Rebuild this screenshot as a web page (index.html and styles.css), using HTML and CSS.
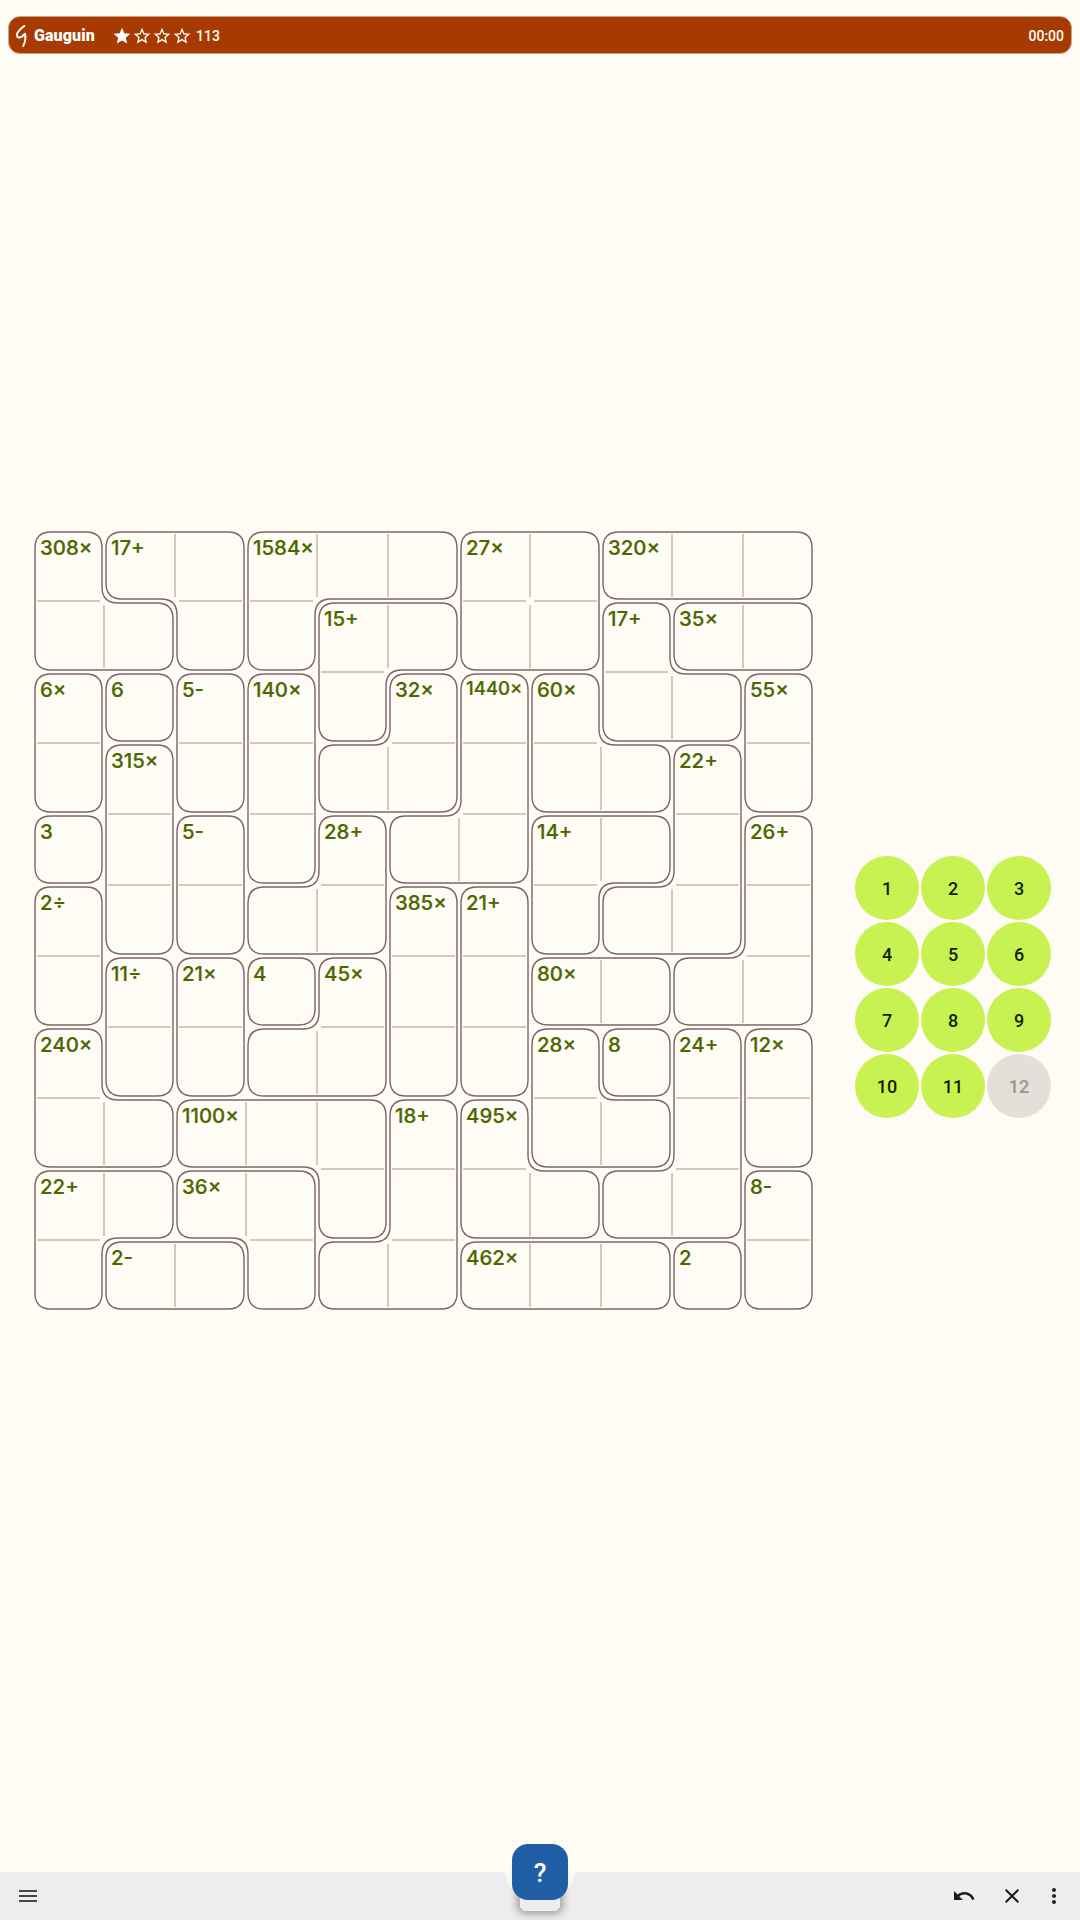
FILE: index.html
```html
<!DOCTYPE html>
<html lang="en">
<head>
<meta charset="utf-8">
<title>Gauguin</title>
<link rel="stylesheet" href="styles.css">
</head>
<body>
<header class="topbar">
  <svg class="logo" width="12" height="22" viewBox="0 0 12 22" fill="none" stroke="currentColor" stroke-width="2" stroke-linecap="round" stroke-linejoin="round"><path d="M8.300 1C6 2 1.500 7 1 9C.500 12.500 3 13.500 6 11.500L9 8.800C9.800 13 9 18 7.200 21"/></svg>
  <span class="app-name">Gauguin</span>
  <span class="stars">
    <svg class="star" viewBox="0 0 24 24"><path d="M12 17.270 18.180 21l-1.640-7.030L22 9.240l-7.190-.610L12 2 9.190 8.630 2 9.240l5.460 4.730L5.820 21z"/></svg>
    <svg class="star" viewBox="0 0 24 24"><path d="m22 9.240-7.190-.620L12 2 9.190 8.630 2 9.240l5.460 4.730L5.820 21 12 17.270 18.180 21l-1.630-7.030zM12 15.400l-3.760 2.270 1-4.280-3.320-2.880 4.380-.380L12 6.100l1.710 4.040 4.380.38-3.320 2.880 1 4.280z"/></svg>
    <svg class="star" viewBox="0 0 24 24"><path d="m22 9.240-7.190-.620L12 2 9.190 8.630 2 9.240l5.460 4.730L5.820 21 12 17.270 18.180 21l-1.630-7.030zM12 15.400l-3.760 2.270 1-4.280-3.320-2.880 4.380-.380L12 6.100l1.710 4.040 4.380.38-3.320 2.880 1 4.280z"/></svg>
    <svg class="star" viewBox="0 0 24 24"><path d="m22 9.240-7.190-.620L12 2 9.190 8.630 2 9.240l5.460 4.730L5.820 21 12 17.270 18.180 21l-1.630-7.030zM12 15.400l-3.760 2.270 1-4.280-3.320-2.880 4.380-.380L12 6.100l1.710 4.040 4.380.38-3.320 2.880 1 4.280z"/></svg>
  </span>
  <span class="difficulty">113</span>
  <time class="timer">00:00</time>
</header>
<main class="game">
  <svg class="board" width="781" height="781" viewBox="0 0 781 781"></svg>
  <div class="keypad">
    <button class="key">1</button><button class="key">2</button><button class="key">3</button>
    <button class="key">4</button><button class="key">5</button><button class="key">6</button>
    <button class="key">7</button><button class="key">8</button><button class="key">9</button>
    <button class="key">10</button><button class="key">11</button><button class="key" disabled>12</button>
  </div>
</main>
<footer class="bottombar">
  <svg class="menu" width="24" height="24" viewBox="0 0 24 24"><path d="M3 18h18v-2H3zm0-5h18v-2H3zm0-7v2h18V6z"/></svg>
  <svg class="undo" width="24" height="24" viewBox="0 0 24 24"><path d="M12.500 8c-2.650 0-5.050.990-6.900 2.600L2 7v9h9l-3.620-3.620c1.390-1.160 3.160-1.880 5.120-1.880 3.540 0 6.550 2.310 7.600 5.500l2.370-.780C21.080 11.030 17.150 8 12.500 8"/></svg>
  <svg class="close" width="24" height="24" viewBox="0 0 24 24"><path d="M19 6.410 17.590 5 12 10.590 6.410 5 5 6.410 10.590 12 5 17.590 6.410 19 12 13.410 17.590 19 19 17.590 13.410 12z"/></svg>
  <svg class="more" width="24" height="24" viewBox="0 0 24 24"><path d="M12 8c1.100 0 2-.900 2-2s-.900-2-2-2-2 .900-2 2 .900 2 2 2m0 2c-1.100 0-2 .900-2 2s.900 2 2 2 2-.900 2-2-.900-2-2-2m0 6c-1.100 0-2 .900-2 2s.900 2 2 2 2-.900 2-2-.900-2-2-2"/></svg>
  <svg class="cradle" width="78" height="32" viewBox="0 0 78 32"><path d="M0 0H78C74 0 73 2 72.500 4C69 19 62 28 52 28H26C16 28 9 19 5.500 4C5 2 4 0 0 0Z"/></svg>
  <div class="fab-shade"></div>
  <div class="fab-tab"></div>
  <button class="fab">?</button>
</footer>
<script src="board.js"></script>
</body>
</html>
```
FILE: styles.css
```css
* { box-sizing: border-box; }
body {
  margin: 0;
  width: 1080px;
  height: 1920px;
  display: flex;
  flex-direction: column;
  background: #fffcf5;
  font-family: Roboto, sans-serif;
  overflow: hidden;
}
.topbar {
  display: flex;
  align-items: center;
  height: 38px;
  margin: 16px 8px 0;
  padding: 1px 7px 0 7px;
  border: 1px solid #c9a58d;
  border-radius: 12px;
  background: #a73a00;
  color: #fff;
  flex: none;
}
.logo { flex: none; }
.app-name { margin-left: 6px; width: 78px; font-size: 16px; font-weight: 900; letter-spacing: .1px; }
.stars { display: flex; }
.star { width: 20px; height: 20px; fill: currentColor; flex: none; }
.difficulty { margin-left: 4px; font-size: 14px; font-weight: 500; }
.timer { margin-left: auto; font-size: 14px; font-weight: 500; }
.game {
  flex: 1;
  display: flex;
  align-items: flex-start;
  padding: 476px 0 0 33px;
  gap: 41px;
}
.board { display: block; flex: none; }
.cage { fill: none; stroke: #7d6467; stroke-width: 1.4; }
.divider { stroke: #d1c8c2; stroke-width: 2; }
.clue { fill: #4c6700; font-family: Inter, sans-serif; font-size: 20.4px; font-weight: 500; stroke: #4c6700; stroke-width: .2; }
.clue-long { font-size: 18.6px; }
.keypad { display: grid; grid-template-columns: repeat(3, 64px); gap: 2px; margin-top: 326px; }
.key {
  height: 64px;
  padding: 1px 0 0;
  border: 0;
  border-radius: 50%;
  background: #c8f152;
  color: #151f00;
  font: 500 18px Roboto, sans-serif;
}
.key:disabled { background: #e3e0da; color: #97968f; }
.bottombar {
  position: relative;
  flex: none;
  display: flex;
  align-items: center;
  height: 48px;
  padding: 0 14px 0 16px;
  background: #efedf0;
  fill: #1b1c18;
}
.menu { fill: #46483c; }
.undo { margin-left: auto; }
.close { margin-left: 24px; }
.more { margin-left: 18px; }
.cradle { position: absolute; left: 501px; top: 0; fill: #fffcf5; }
.fab-shade {
  position: absolute;
  left: 520px;
  top: -8px;
  width: 40px;
  height: 46px;
  border-radius: 5px;
  box-shadow: 0 1px 9px 3px rgba(0, 0, 0, .35);
}
.fab-tab {
  position: absolute;
  left: 520px;
  top: 20px;
  width: 40px;
  height: 19px;
  background: #efedf0;
  clip-path: polygon(0 0, 100% 0, 100% 15px, 36px 100%, 4px 100%, 0 15px);
}
.fab {
  position: absolute;
  left: 512px;
  top: -28px;
  width: 56px;
  height: 56px;
  padding: 1px 0 0;
  border: 0;
  border-radius: 16px;
  background: #205fa6;
  color: #fff;
  font: 500 26px Roboto, sans-serif;
}
```
FILE: board.js
```js
const CELL = 71, INSET = 2, RADIUS = 16;
const rows = [
  'abbcccddeee',
  'aabcffddghh',
  'ijklfmnoggp',
  'iqklmmnoorp',
  'sqtlunnvvrw',
  'xqtuuyzvrrw',
  'xABCDyzEEww',
  'FABDDyzGHIJ',
  'FFKKKLMGGIJ',
  'NNOOKLMMIIP',
  'NQQOLLRRRSP'
];
const clues = {
  a: '308×', b: '17+', c: '1584×', d: '27×', e: '320×', f: '15+', g: '17+', h: '35×',
  i: '6×', j: '6', k: '5-', l: '140×', m: '32×', n: '1440×', o: '60×', p: '55×',
  q: '315×', r: '22+', s: '3', t: '5-', u: '28+', v: '14+', w: '26+', x: '2÷',
  y: '385×', z: '21+', A: '11÷', B: '21×', C: '4', D: '45×', E: '80×', F: '240×',
  G: '28×', H: '8', I: '24+', J: '12×', K: '1100×', L: '18+', M: '495×', N: '22+',
  O: '36×', P: '8-', Q: '2-', R: '462×', S: '2'
};
const board = document.querySelector('.board');
const at = (r, c) => (rows[r] || '')[c];

function add(tag, attrs, text) {
  const el = document.createElementNS('http://www.w3.org/2000/svg', tag);
  for (const k in attrs) el.setAttribute(k, attrs[k]);
  if (text) el.textContent = text;
  board.append(el);
}

// Walks a cage clockwise and returns its outline, pulled in by INSET.
function outline(id) {
  const next = new Map();
  const edge = (x, y, dx, dy) => next.set(x + ',' + y, { x, y, dx, dy });
  rows.forEach((line, r) => [...line].forEach((ch, c) => {
    if (ch !== id) return;
    if (at(r - 1, c) !== id) edge(c, r, 1, 0);
    if (at(r, c + 1) !== id) edge(c + 1, r, 0, 1);
    if (at(r + 1, c) !== id) edge(c + 1, r + 1, -1, 0);
    if (at(r, c - 1) !== id) edge(c, r + 1, 0, -1);
  }));
  const start = next.values().next().value;
  const pts = [];
  let e = start;
  do {
    const n = next.get((e.x + e.dx) + ',' + (e.y + e.dy));
    if (n.dx !== e.dx || n.dy !== e.dy) {
      pts.push({
        x: n.x * CELL - (e.dy + n.dy) * INSET,
        y: n.y * CELL + (e.dx + n.dx) * INSET,
        a: e, b: n
      });
    }
    e = n;
  } while (e !== start);
  return pts.map((p, i) =>
    `${i ? 'L' : 'M'}${p.x - p.a.dx * RADIUS} ${p.y - p.a.dy * RADIUS}` +
    `Q${p.x} ${p.y} ${p.x + p.b.dx * RADIUS} ${p.y + p.b.dy * RADIUS}`).join('') + 'Z';
}

rows.forEach((line, r) => [...line].forEach((ch, c) => {
  const x = c * CELL, y = r * CELL;
  if (at(r, c + 1) === ch) add('line', { class: 'divider', x1: x + CELL, x2: x + CELL, y1: y + 4, y2: y + CELL - 4 });
  if (at(r + 1, c) === ch) add('line', { class: 'divider', y1: y + CELL, y2: y + CELL, x1: x + 4, x2: x + CELL - 4 });
}));
for (const id in clues) {
  add('path', { class: 'cage', d: outline(id) });
  const r = rows.findIndex(line => line.includes(id));
  const c = rows[r].indexOf(id);
  add('text', {
    class: id === 'n' ? 'clue clue-long' : 'clue',
    x: c * CELL + 7, y: r * CELL + (id === 'n' ? 23 : 24.7)
  }, clues[id]);
}
```
